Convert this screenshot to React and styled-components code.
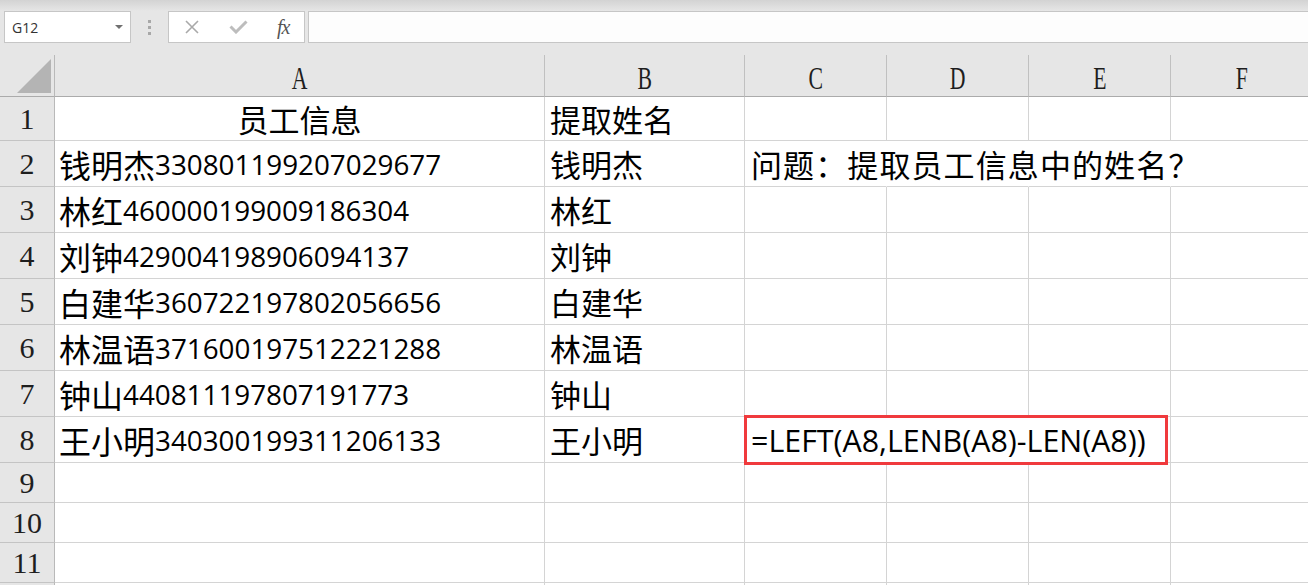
import React from 'react'
import styled, { createGlobalStyle } from 'styled-components'

const GlobalStyle = createGlobalStyle`
  html, body {
    margin: 0;
    padding: 0;
    background: #e6e6e6;
    overflow: hidden;
  }
  body {
    font-family: "Noto Sans CJK SC", "Noto Sans", sans-serif;
  }
`

const Window = styled.div`
  width: 1308px;
  height: 585px;
  overflow: hidden;
  background: #e6e6e6;
`

const TopShade = styled.div`
  height: 11px;
  background: linear-gradient(#d3d3d3, #e6e6e6);
`

const FormulaRow = styled.div`
  display: flex;
  height: 32px;
  padding-left: 4px;
  margin-bottom: 12px;
`

const NameBox = styled.div`
  width: 127px;
  box-sizing: border-box;
  border: 1px solid #c6c6c6;
  background: #fff;
  display: flex;
  align-items: center;
  justify-content: space-between;
  padding: 0 7px 0 7px;
  font-family: "Open Sans", sans-serif;
  font-size: 14px;
  color: #333;
`

const Caret = styled.span`
  width: 0;
  height: 0;
  border-left: 4px solid transparent;
  border-right: 4px solid transparent;
  border-top: 4px solid #707070;
`

const Grip = styled.div`
  width: 37px;
  display: flex;
  flex-direction: column;
  align-items: center;
  justify-content: center;
  gap: 3px;
  span {
    width: 3px;
    height: 3px;
    background: #a8a8a8;
  }
`

const FxBox = styled.div`
  width: 137px;
  box-sizing: border-box;
  border: 1px solid #c6c6c6;
  background: #fff;
  display: flex;
  align-items: center;
  justify-content: space-around;
  margin-right: 3px;
`

const FxText = styled.span`
  font-family: "Liberation Serif", serif;
  font-style: italic;
  font-size: 20px;
  color: #555;
  letter-spacing: -1px;
`

const FormulaInput = styled.div`
  flex: 1;
  border: 1px solid #c6c6c6;
  border-right: none;
  background: #fdfdfd;
`

const Sheet = styled.div`
  display: grid;
  grid-template-columns: 55px 490px 200px repeat(4, 142px);
  grid-template-rows: 42px 44px repeat(7, 46px) repeat(4, 40px);
  background: #fff;
`

const Corner = styled.div`
  position: relative;
  background: #e6e6e6;
  box-sizing: border-box;
  border-right: 1px solid #b9b9b9;
  border-bottom: 1px solid #ababab;
  display: flex;
  align-items: flex-end;
  justify-content: flex-end;
  padding: 0 3px 3px 0;
`

const ColHead = styled.div`
  background: #e6e6e6;
  box-sizing: border-box;
  border-right: 1px solid #c0c0c0;
  border-bottom: 1px solid #ababab;
  display: flex;
  align-items: center;
  justify-content: center;
  padding-top: 5px;
`

const Letter = styled.span`
  display: inline-block;
  font-family: "Liberation Serif", serif;
  font-size: 32px;
  line-height: 1;
  color: #1e1e1e;
  transform: scaleX(0.68);
`

const RowHead = styled.div`
  background: #e6e6e6;
  box-sizing: border-box;
  border-right: 1px solid #b9b9b9;
  border-bottom: 1px solid #c4c4c4;
  display: flex;
  align-items: center;
  justify-content: center;
  font-family: "Liberation Serif", serif;
  font-size: 30px;
  color: #1e1e1e;
`

const Cell = styled.div`
  position: relative;
  box-sizing: border-box;
  min-width: 0;
  border-right: 1px solid ${p => (p.$open ? 'transparent' : '#d4d4d4')};
  border-bottom: 1px solid #d4d4d4;
  display: flex;
  align-items: center;
  justify-content: ${p => (p.$center ? 'center' : 'flex-start')};
  padding: 0 ${p => (p.$pad ?? 4)}px;
  white-space: nowrap;
  font-size: ${p => p.$size || 31}px;
  letter-spacing: ${p => p.$spread || 0}px;
  color: #000;
`

const IdNumber = styled.span`
  font-family: "Open Sans", sans-serif;
  font-size: 27.8px;
`

const Highlight = styled.div`
  position: absolute;
  z-index: 2;
  left: -1px;
  top: -2px;
  width: 424px;
  height: 50px;
  box-sizing: border-box;
  border: 3px solid #f03a3d;
  background: #fff;
  display: flex;
  align-items: center;
  padding-left: 4px;
  font-family: "Open Sans", sans-serif;
  font-size: 30.4px;
  color: #000;
`

const columns = ['A', 'B', 'C', 'D', 'E', 'F']

const people = [
    ['钱明杰', '330801199207029677'],
    ['林红', '460000199009186304'],
    ['刘钟', '429004198906094137'],
    ['白建华', '360722197802056656'],
    ['林温语', '371600197512221288'],
    ['钟山', '440811197807191773'],
    ['王小明', '340300199311206133']
]

function Triangle() {
    return (
        <svg width='34' height='34' viewBox='0 0 34 34'>
            <polygon points='34,0 34,34 0,34' fill='#b4b4b4' />
        </svg>
    )
}

function Cross() {
    return (
        <svg width='16' height='14' viewBox='0 0 16 14'>
            <path d='M2 1 L14 13 M14 1 L2 13' stroke='#a9a9a9' strokeWidth='1.6' fill='none' />
        </svg>
    )
}

function Tick() {
    return (
        <svg width='19' height='14' viewBox='0 0 19 14'>
            <path d='M1.5 6.5 L7 12 L17.5 1.5' stroke='#bdbdbd' strokeWidth='3' fill='none' />
        </svg>
    )
}

function EmptyCells({ from = 2 }) {
    return columns.slice(from).map(c => <Cell key={c} />)
}

export default function App() {
    return (
        <Window>
            <GlobalStyle />
            <TopShade />
            <FormulaRow>
                <NameBox>
                    G12
                    <Caret />
                </NameBox>
                <Grip>
                    <span />
                    <span />
                    <span />
                </Grip>
                <FxBox>
                    <Cross />
                    <Tick />
                    <FxText>fx</FxText>
                </FxBox>
                <FormulaInput />
            </FormulaRow>

            <Sheet>
                <Corner>
                    <Triangle />
                </Corner>
                {columns.map(c => (
                    <ColHead key={c}>
                        <Letter>{c}</Letter>
                    </ColHead>
                ))}

                <RowHead>1</RowHead>
                <Cell $center>员工信息</Cell>
                <Cell $pad={5}>提取姓名</Cell>
                <EmptyCells />

                {people.map(([name, id], i) => {
                    const row = i + 2
                    return (
                        <React.Fragment key={row}>
                            <RowHead>{row}</RowHead>
                            <Cell $size={32}>
                                {name}
                                <IdNumber>{id}</IdNumber>
                            </Cell>
                            <Cell $pad={5}>{name}</Cell>
                            {row === 2 && (
                                <>
                                    <Cell $open $pad={6} $spread={1.1}>问题：提取员工信息中的姓名？</Cell>
                                    <Cell $open />
                                    <Cell $open />
                                    <Cell />
                                </>
                            )}
                            {row === 8 && (
                                <>
                                    <Cell $open>
                                        <Highlight>=LEFT(A8,LENB(A8)-LEN(A8))</Highlight>
                                    </Cell>
                                    <Cell $open />
                                    <Cell />
                                    <Cell />
                                </>
                            )}
                            {row !== 2 && row !== 8 && <EmptyCells />}
                        </React.Fragment>
                    )
                })}

                {[9, 10, 11].map(row => (
                    <React.Fragment key={row}>
                        <RowHead>{row}</RowHead>
                        <Cell />
                        <Cell />
                        <EmptyCells />
                    </React.Fragment>
                ))}
                <RowHead />
                <Cell />
                <Cell />
                <EmptyCells />
            </Sheet>
        </Window>
    )
}
